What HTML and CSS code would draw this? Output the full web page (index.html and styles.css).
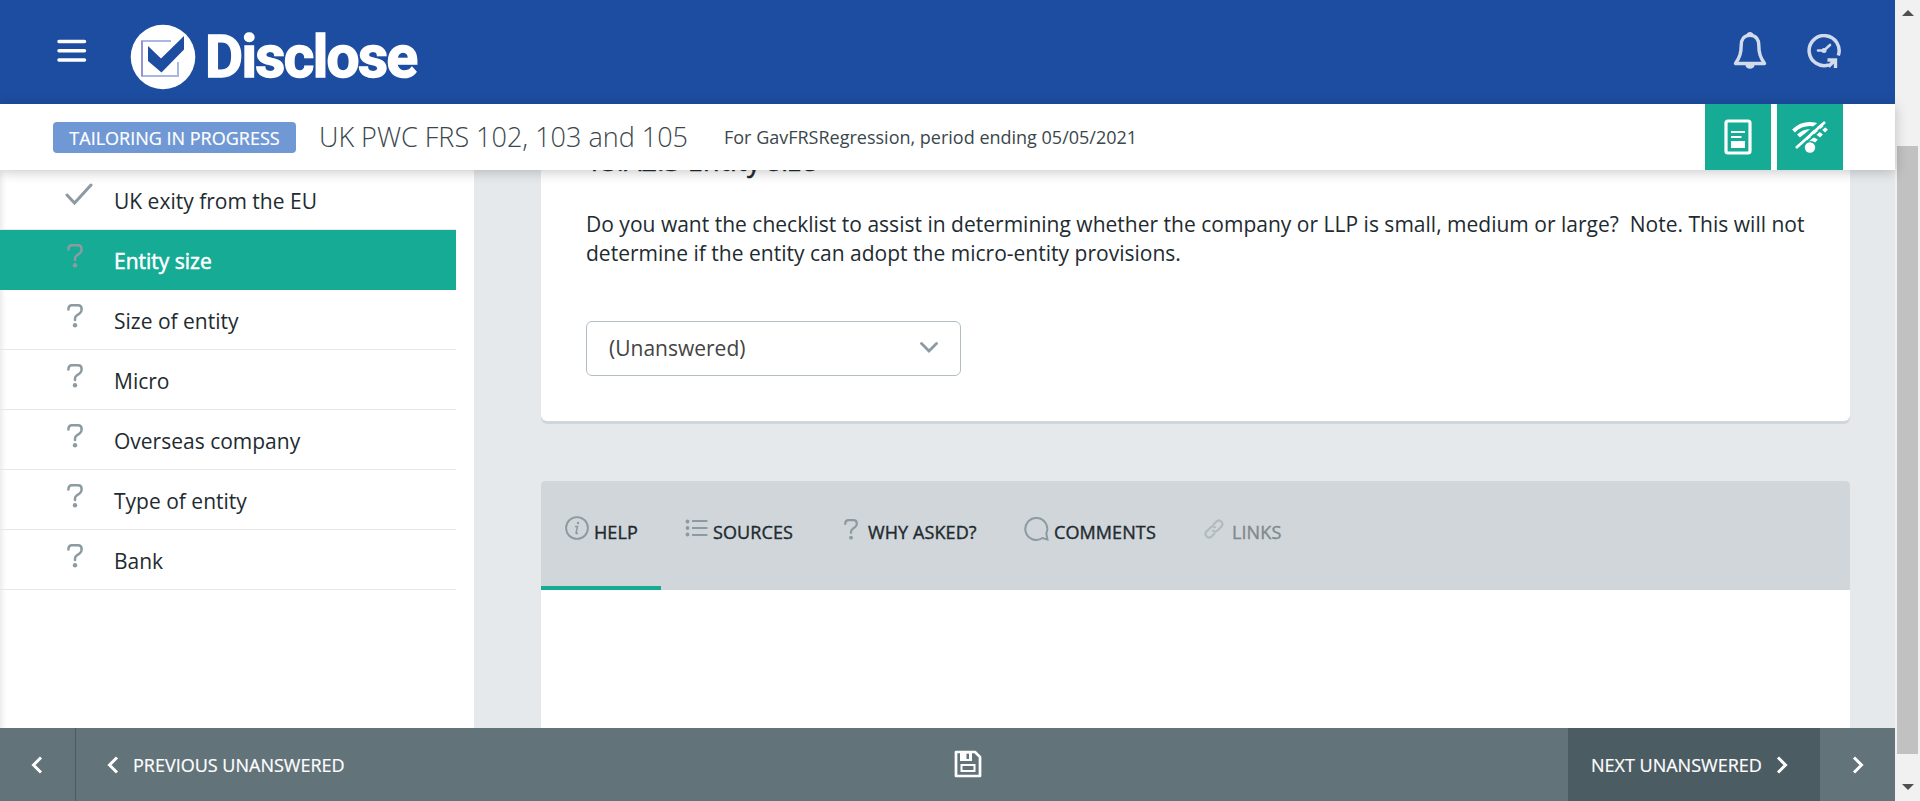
FILE: index.html
```html
<!DOCTYPE html>
<html lang="en">
<head>
<meta charset="utf-8">
<title>Disclose</title>
<link rel="stylesheet" href="styles.css">
</head>
<body>
<svg class="defs" aria-hidden="true">
  <symbol id="question" viewBox="0 0 16 24"><path d="M1.400 5.600C1.400 2.500 2.600 1.300 5 1.300h6c2.400 0 3.600 1.200 3.600 3.600v.8c0 1.800-.6 2.700-2 3.700L10 11.300c-1.400 1-2 1.800-2 3.200V16" fill="none" stroke="currentColor" stroke-width="2.500" stroke-linecap="round"/><circle cx="8" cy="21.300" r="2.200" fill="currentColor"/></symbol>
  <symbol id="left" viewBox="0 0 12 18"><path d="M10 1.500 2.500 9l7.500 7.500" fill="none" stroke="currentColor" stroke-width="3"/></symbol>
  <symbol id="right" viewBox="0 0 12 18"><path d="m2 1.500 7.500 7.500L2 16.500" fill="none" stroke="currentColor" stroke-width="3"/></symbol>
</svg>
<div class="app">
  <div class="page">
    <header class="top">
      <svg class="menu" viewBox="0 0 30 24"><path d="M2 2.500h25.500M2 11.800h25.500M2 21h25.500" stroke="#fff" stroke-width="3.500" stroke-linecap="round"/></svg>
      <svg class="logo" viewBox="0 0 66 66"><circle cx="33" cy="33" r="32.300" fill="#fff"/><path d="M41 17H12v35h36V38" fill="none" stroke="#a9b8de" stroke-width="2"/><path d="M12 17v35" stroke="#8f86d0" stroke-width="1.500"/><path d="m18 22 13 12.500L54 12v13.500L31.500 48.500 18 37z" fill="#1d4da0"/></svg>
      <span class="brand">Disclose</span>
      <div class="tools">
        <svg class="bell" viewBox="0 0 34 40"><path d="M17 4.200c-6 0-8.800 4.500-8.800 10 0 8-1.500 12-5.700 18.300h29C27.300 26.200 25.800 22.200 25.800 14.200c0-5.500-2.800-10-8.800-10z" fill="none" stroke="currentColor" stroke-width="3.400" stroke-linejoin="round"/><path d="M13.500 3.800C14.200.2 19.800.2 20.500 3.800zM12.500 34h9c0 5-9 5-9 0z" fill="currentColor"/></svg>
        <svg class="clock" viewBox="0 0 34 34"><path d="M31.300 21.500A15 15 0 1 0 22 30.800" fill="none" stroke="currentColor" stroke-width="3.500"/><path d="M11 16.500h6l6-5.500" fill="none" stroke="currentColor" stroke-width="2.600" stroke-linecap="round"/><circle cx="17" cy="16.500" r="2.500" fill="currentColor"/><path d="M20.500 26h8v8M21.500 32.500l6-6" fill="none" stroke="currentColor" stroke-width="3.400"/></svg>
      </div>
    </header>
    <div class="sub">
      <span class="badge">TAILORING IN PROGRESS</span>
      <span class="title">UK PWC FRS 102, 103 and 105</span>
      <span class="period">For GavFRSRegression, period ending 05/05/2021</span>
      <div class="actions">
        <span class="action"><svg width="28" height="36" viewBox="0 0 28 36"><rect x="2" y="2" width="24" height="32" rx="2" fill="none" stroke="#fff" stroke-width="3.200"/><path d="M7 13h14M7 18h10.500" stroke="#fff" stroke-width="2"/><path d="M7 22h14v7H7z" fill="#fff"/></svg></span>
        <span class="action"><svg width="36" height="32" viewBox="0 0 36 32"><g fill="none" stroke="#fff"><path d="M1.500 10C11 .8 25 .8 34.500 10" stroke-width="4"/><path d="M6.500 15C13 8.500 23 8.500 29.500 15" stroke-width="4"/><path d="M15 19c3-1.500 6.500-1.500 9.500 1" stroke-width="4"/><path d="m2 24 29-25" stroke="#15ab95" stroke-width="3"/><path d="m6 28.500 29-25" stroke="#15ab95" stroke-width="2"/><path d="M4 27 33 1" stroke-width="2.700"/></g><circle cx="18" cy="26.500" r="5.200" fill="#fff"/></svg></span>
      </div>
    </div>
    <div class="body">
      <nav class="side">
        <div class="item"><svg class="tick" viewBox="0 0 28 24"><path d="m2 13 7.500 8L26 3" fill="none" stroke="currentColor" stroke-width="3" stroke-linecap="round"/></svg><span>UK exity from the EU</span></div>
        <div class="item active"><svg class="q"><use href="#question"/></svg><span>Entity size</span></div>
        <div class="item"><svg class="q"><use href="#question"/></svg><span>Size of entity</span></div>
        <div class="item"><svg class="q"><use href="#question"/></svg><span>Micro</span></div>
        <div class="item"><svg class="q"><use href="#question"/></svg><span>Overseas company</span></div>
        <div class="item"><svg class="q"><use href="#question"/></svg><span>Type of entity</span></div>
        <div class="item"><svg class="q"><use href="#question"/></svg><span>Bank</span></div>
      </nav>
      <main class="main">
        <section class="card">
          <h2>1S.A2.3 Entity size</h2>
          <p>Do you want the checklist to assist in determining whether the company or LLP is small, medium or large?&nbsp; Note. This will not<br>determine if the entity can adopt the micro-entity provisions.</p>
          <div class="select"><span>(Unanswered)</span><svg width="18" height="11" viewBox="0 0 18 11"><path d="m1.500 1.500 7.500 7.500 7.500-7.500" fill="none" stroke="#8c9ba1" stroke-width="2.800" stroke-linecap="round"/></svg></div>
        </section>
        <section class="panel">
          <div class="tabs">
            <div class="tab help"><svg width="24" height="24" viewBox="0 0 24 24"><circle cx="12" cy="12" r="10.900" fill="none" stroke="currentColor" stroke-width="1.900"/><path d="M10 10.500h2.500l-1.500 6.500q0 1 2 0" fill="none" stroke="currentColor" stroke-width="1.500"/><circle cx="13" cy="7" r="1.200" fill="currentColor"/></svg><span>HELP</span></div>
            <div class="tab sources"><svg width="23" height="24" viewBox="0 0 23 24"><path d="M7 5h15.500M7 12h15.500M7 19h15.500" stroke="currentColor" stroke-width="2"/><g fill="currentColor"><circle cx="2.500" cy="5.500" r="1.900"/><circle cx="2.500" cy="12" r="1.900"/><circle cx="2.500" cy="18.500" r="1.900"/></g></svg><span>SOURCES</span></div>
            <div class="tab why"><svg class="tq"><use href="#question"/></svg><span>WHY ASKED?</span></div>
            <div class="tab comments"><svg width="25" height="25" viewBox="0 0 25 25"><path d="M23.500 23.500 18.500 22A11 11 0 1 1 22.300 17.500z" fill="none" stroke="currentColor" stroke-width="2"/></svg><span>COMMENTS</span></div>
            <div class="tab links"><svg width="20" height="20" viewBox="0 0 20 20"><g fill="none" stroke="currentColor" stroke-width="2.200"><path d="m9 6 3.500-3.500c3-3 8 1.500 5 5L13.500 11.500c-1.700 1.700-4 1.200-5-.5"/><path d="m11 14-3.500 3.500c-3 3-8-1.500-5-5L6.500 8.500c1.700-1.700 4-1.200 5 .5"/></g></svg><span>LINKS</span></div>
          </div>
        </section>
      </main>
    </div>
    <footer class="foot">
      <div class="prev"><svg class="chev"><use href="#left"/></svg></div>
      <div class="prevun"><svg class="chev"><use href="#left"/></svg><span>PREVIOUS UNANSWERED</span></div>
      <div class="save"><svg width="28" height="28" viewBox="0 0 28 28"><path d="M2 2h19l5 5v19H2z" fill="none" stroke="#fff" stroke-width="2.700" stroke-linejoin="round"/><path fill-rule="evenodd" d="M6 2h12v9H6zm6.500 1.500V9H15V3.500z" fill="#fff"/><path d="M7.500 15h13v6h-13z" fill="none" stroke="#fff" stroke-width="2"/></svg></div>
      <div class="nextun"><span>NEXT UNANSWERED</span><svg class="chev"><use href="#right"/></svg></div>
      <div class="next"><svg class="chev"><use href="#right"/></svg></div>
    </footer>
  </div>
  <div class="scroll"><i class="up"></i><div class="thumb"></div><i class="down"></i></div>
</div>
</body>
</html>
```
FILE: styles.css
```css
* { box-sizing: border-box; }
body { margin: 0; font-family: "Open Sans", sans-serif; color: #1e2b30; font-size: 21px; }
svg { display: block; flex: none; }
.defs { display: none; }
.app { display: flex; width: 100%; height: 801px; overflow: hidden; }
.page { width: 1895px; height: 801px; display: flex; flex-direction: column; }

.top { height: 104px; flex: none; background: #1d4da0; display: flex; align-items: flex-start; padding-left: 57px; }
.menu { width: 30px; height: 24px; margin-top: 39px; }
.logo { width: 66px; height: 66px; margin: 24px 0 0 43px; }
.brand { margin: 22px 0 0 9px; font: 700 58.500px/71px Roboto, sans-serif; letter-spacing: -1.600px; color: #fff; -webkit-text-stroke: 1.500px #fff; }
.tools { margin-left: auto; margin-right: 54px; display: flex; gap: 40px; color: #d2dbec; }
.bell { width: 34px; height: 40px; margin-top: 31px; }
.clock { width: 34px; height: 34px; margin-top: 34px; }

.sub { height: 66px; flex: none; background: #fff; display: flex; align-items: center; padding-left: 53px; position: relative; z-index: 2; box-shadow: 0 2px 12px rgba(0,0,0,.22); white-space: nowrap; }
.badge { width: 243px; height: 31px; border-radius: 4px; background: #6f98d4; color: #fff; font-size: 18px; line-height: 33px; text-align: center; -webkit-text-stroke: .2px; }
.title { margin-left: 23px; font-weight: 300; font-size: 27px; color: #3a474c; padding-bottom: 2px; }
.period { margin-left: 36px; font-size: 18px; color: #3a474c; }
.actions { margin-left: auto; margin-right: 52px; display: flex; gap: 6px; }
.action { width: 66px; height: 66px; background: #15ab95; display: flex; align-items: center; justify-content: center; }

.body { flex: 1; min-height: 0; display: flex; background: #e5e9ec; overflow: hidden; }
.side { width: 474px; background: #fff; padding-right: 18px; box-shadow: inset 6px 0 6px -5px rgba(0,0,0,.12); }
.item { height: 60px; display: flex; border-bottom: 1px solid #e6e8e9; color: #1e2b30; padding-left: 67px; }
.item span { line-height: 62px; }
.item svg { color: #8c9ba1; }
.q { width: 16px; height: 24px; margin: 14px 31px 0 0; }
.tick { width: 28px; height: 24px; margin: 12px 21px 0 -2px; }
.active { background: #15ab95; border-color: #15ab95; }
.active span { color: #fff; -webkit-text-stroke: .5px; }

.main { flex: 1; padding: 0 45px 0 67px; }
.card { height: 251px; background: #fff; border-radius: 0 0 6px 6px; box-shadow: 0 3px 0 #d1d6da; padding: 0 45px; overflow: hidden; }
.card h2 { margin: -28px 0 0; font-size: 27px; line-height: 38px; font-weight: 400; -webkit-text-stroke: .5px; letter-spacing: .3px; }
.card p { margin: 30px 0 0; line-height: 29px; white-space: nowrap; letter-spacing: .01px; }
.select { margin-top: 53px; width: 375px; height: 55px; border: 1px solid #b3bec4; border-radius: 6px; display: flex; align-items: center; justify-content: space-between; padding: 0 22px 2px; color: #444; }
.panel { margin-top: 60px; height: 260px; background: #fff; border-radius: 4px 4px 0 0; overflow: hidden; }
.tabs { height: 109px; background: #d1d6da; display: flex; font-size: 18px; -webkit-text-stroke: .4px; letter-spacing: .1px; color: #1e2b30; }
.tab { height: 109px; display: flex; gap: 5px; padding: 35px 0 0 24px; white-space: nowrap; }
.tab span { line-height: 33px; }
.tab svg { color: #8c9ba1; }
.help { width: 120px; border-bottom: 4px solid #15ab95; }
.sources { width: 159px; }
.why { width: 180px; }
.tq { width: 14px; height: 21px; margin: 3px 5px 0 0; }
.comments { width: 180px; }
.links { color: #80898e; gap: 8px; letter-spacing: .1px; }
.links svg { color: #b1bbbf; margin-top: 3px; }

.foot { height: 73px; flex: none; background: #62737a; color: #fff; display: flex; align-items: center; font-size: 18px; -webkit-text-stroke: .2px; position: relative; z-index: 3; white-space: nowrap; }
.foot > div { height: 73px; display: flex; align-items: center; }
.foot span { line-height: 74px; }
.chev { width: 12px; height: 18px; }
.prev { width: 76px; border-right: 1px solid #4c5c63; padding-left: 31px; }
.prevun { width: 300px; padding-left: 31px; gap: 14px; }
.save { margin-left: 578px; padding-bottom: 1px; }
.foot .nextun { margin-left: auto; width: 252px; background: #4c5c63; padding-left: 23px; gap: 14px; }
.next { width: 75px; padding-left: 32px; }

.scroll { width: 25px; background: #f1f1f1; display: flex; flex-direction: column; align-items: center; padding: 10px 0 11px; }
.up { border: 6px solid transparent; border-top: 0; border-bottom-color: #505050; }
.thumb { width: 21px; height: 608px; background: #c1c1c1; margin-top: 130px; }
.down { margin-top: auto; border: 6px solid transparent; border-bottom: 0; border-top-color: #505050; }
```
